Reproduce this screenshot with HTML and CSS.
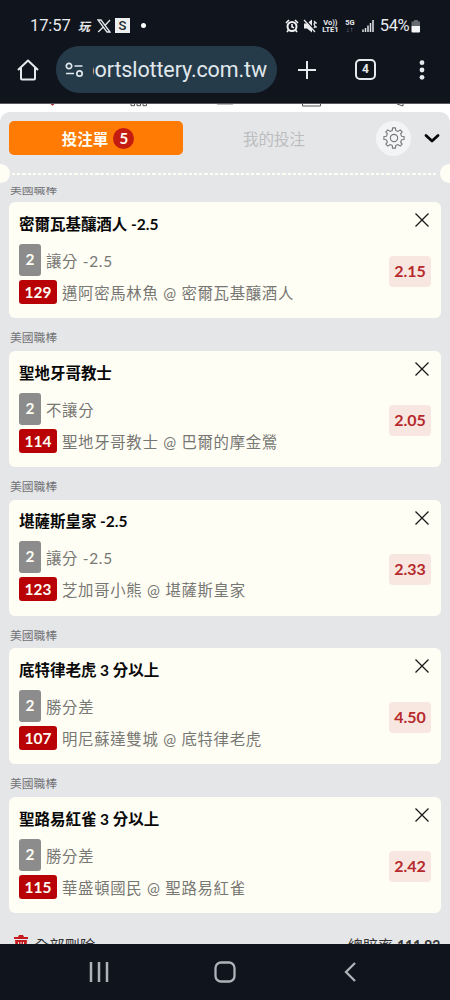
FILE: index.html
```html
<!DOCTYPE html>
<html lang="zh-Hant">
<head>
<meta charset="utf-8">
<title>投注單</title>
<link rel="stylesheet" href="styles.css">
</head>
<body>
<div class="phone">
  <header class="top">
    <div class="status">
      <span class="clock">17:57</span>
      <span class="app-glyph">玩</span>
      <svg class="x-logo" width="14" height="14" viewBox="0 0 14 14" fill="none" stroke="#e4e6e9"><path d="M1 1h3l9 12h-3zM13 1L8.2 6.2M6 8.2L1.2 13" stroke-width="1.3"/></svg>
      <span class="s-app">S</span>
      <span class="dot"></span>
      <div class="status-right">
        <svg width="14" height="14" viewBox="0 0 14 14"><circle cx="7" cy="7.5" r="4.5" fill="none" stroke="#f0f1f3" stroke-width="2"/><path d="M7 5v3l2 .8M1 4L4 1M13 4L10 1M3.5 11L2 13M10.500 11L12 13" fill="none" stroke="#f0f1f3" stroke-width="1.6"/></svg>
        <svg class="mute" width="14" height="14" viewBox="0 0 14 14"><path d="M1 4.500h3l5-4v13L4 9.500H1z" fill="#e8eaed"/><path d="M2 .5l11 12" stroke="#10141d" stroke-width="1.500"/><path d="M1 1l11 12M11 2l1 1-1 2 1 2-1 2M13 3v2M13 7v2" fill="none" stroke="#e8eaed" stroke-width="1.2"/></svg>
        <span class="lte"><b>Vo))</b><b>LTE1</b></span>
        <span class="five"><b>5G</b><i>↓↑</i></span>
        <svg class="signal" width="12" height="12" viewBox="0 0 12 12"><path d="M1 12V9.500M3.500 12V8M6 12V5.500M8.500 12V3M11 12V0" stroke="#e0e2e6" stroke-width="1.5"/></svg>
        <span class="percent">54%</span>
        <svg width="10" height="14" viewBox="0 0 10 14"><path d="M3 1h4v1.500h2V7H.5V2.500H3z" fill="#666b72"/><path d="M.5 7H9v5.500q0 1-1 1H1.500q-1 0-1-1z" fill="#f4f5f6"/></svg>
      </div>
    </div>
    <div class="browser">
      <svg class="home" width="22" height="22" viewBox="0 0 22 22" fill="none" stroke="#e6e9ed" stroke-width="2" stroke-linejoin="round"><path d="M1 11L11 1.500 21 11M4 9v10.500q0 1 1 1h12q1 0 1-1V9"/></svg>
      <div class="address">
        <svg width="19" height="16" viewBox="0 0 19 16" fill="none" stroke="#e0e8ed" stroke-width="1.700"><circle cx="4" cy="4" r="2.700"/><circle cx="14.500" cy="11.500" r="2.700"/><path d="M9.500 4H17.500M1 11.500h8"/></svg>
        <div class="url"><span>portslottery.com.tw</span></div>
      </div>
      <svg class="plus" width="18" height="18" viewBox="0 0 18 18" stroke="#e6e9ed" stroke-width="2"><path d="M9 0v18M0 9h18"/></svg>
      <span class="tabs">4</span>
      <svg class="more" width="6" height="20" viewBox="0 0 6 20" fill="#e6e9ed"><circle cx="3" cy="2.700" r="2.400"/><circle cx="3" cy="10" r="2.400"/><circle cx="3" cy="17.300" r="2.400"/></svg>
    </div>
  </header>
  <div class="site-nav">
    <svg width="450" height="9" viewBox="0 0 450 9"><path d="M50.500 0h4l-2 1.800z" fill="#a22"/><path d="M131 0v1.700h3.500V0M137 0v1.700h3.500V0M143 0v1.700h3.500V0M302.500 0v2h18V0M397 0l6 2V0" fill="none" stroke="#555" stroke-width="1"/><path d="M217 .3h16" stroke="#aaa"/></svg>
  </div>
  <main class="slip">
    <div class="slip-tabs">
      <div class="tab-active">投注單<span class="count">5</span></div>
      <div class="tab">我的投注</div>
      <div class="gear"><svg width="22" height="22" viewBox="-12 -12 24 24" fill="none" stroke="#777" stroke-width="1.200" stroke-linejoin="round"><circle r="4"/><path d="M-1.900-8.300L-1.600-11h3.200l.3 2.700 2.600 1.100 2.200-1.700 2.200 2.200-1.700 2.200 1.100 2.600 2.700.3v3.200l-2.700.3-1.100 2.600 1.700 2.200-2.200 2.200-2.200-1.700-2.600 1.100-.3 2.700h-3.200l-.3-2.700-2.600-1.100-2.200 1.700-2.200-2.200 1.700-2.200-1.100-2.600-2.700-.3v-3.200l2.700-.3 1.100-2.600-1.700-2.200 2.200-2.200 2.200 1.700z"/></svg></div>
      <svg class="chevron" width="16" height="10" viewBox="0 0 16 10" fill="none" stroke="#080808" stroke-width="2.800" stroke-linecap="round" stroke-linejoin="round"><path d="M2 2.500l6 5.500L14 2.500"/></svg>
    </div>
    <div class="perforation"><span class="notch"></span><span class="dashes"></span><span class="notch right"></span></div>
    <div class="bets">
      <div class="league first"><span>美國職棒</span></div>
      <section class="card">
        <div class="info"><h2>密爾瓦基釀酒人 -2.5</h2><div class="line"><b class="pick">2</b>讓分 -2.5</div><div class="line"><b class="code">129</b>邁阿密馬林魚 @ 密爾瓦基釀酒人</div></div>
        <div class="side"><svg class="close" viewBox="0 0 14 14"><path d="M.5.5l13 13M13.500.5l-13 13"/></svg><b class="odds">2.15</b></div>
      </section>
      <div class="league">美國職棒</div>
      <section class="card">
        <div class="info"><h2>聖地牙哥教士</h2><div class="line"><b class="pick">2</b>不讓分</div><div class="line"><b class="code">114</b>聖地牙哥教士 @ 巴爾的摩金鶯</div></div>
        <div class="side"><svg class="close" viewBox="0 0 14 14"><path d="M.5.5l13 13M13.500.5l-13 13"/></svg><b class="odds">2.05</b></div>
      </section>
      <div class="league">美國職棒</div>
      <section class="card">
        <div class="info"><h2>堪薩斯皇家 -2.5</h2><div class="line"><b class="pick">2</b>讓分 -2.5</div><div class="line"><b class="code">123</b>芝加哥小熊 @ 堪薩斯皇家</div></div>
        <div class="side"><svg class="close" viewBox="0 0 14 14"><path d="M.5.5l13 13M13.500.5l-13 13"/></svg><b class="odds">2.33</b></div>
      </section>
      <div class="league">美國職棒</div>
      <section class="card">
        <div class="info"><h2>底特律老虎 3 分以上</h2><div class="line"><b class="pick">2</b>勝分差</div><div class="line"><b class="code">107</b>明尼蘇達雙城 @ 底特律老虎</div></div>
        <div class="side"><svg class="close" viewBox="0 0 14 14"><path d="M.5.5l13 13M13.500.5l-13 13"/></svg><b class="odds">4.50</b></div>
      </section>
      <div class="league">美國職棒</div>
      <section class="card">
        <div class="info"><h2>聖路易紅雀 3 分以上</h2><div class="line"><b class="pick">2</b>勝分差</div><div class="line"><b class="code">115</b>華盛頓國民 @ 聖路易紅雀</div></div>
        <div class="side"><svg class="close" viewBox="0 0 14 14"><path d="M.5.5l13 13M13.500.5l-13 13"/></svg><b class="odds">2.42</b></div>
      </section>
    </div>
    <div class="summary">
      <svg width="14" height="16" viewBox="0 0 14 16" fill="#c41a20"><path d="M0 2h4l1-2h4l1 2h4v2H0zM1 5h12l-1 11H2z"/><path d="M4.500 7v7M7 7v7M9.500 7v7" stroke="#e5e6e8"/></svg>
      <span>全部刪除</span><span class="total">總賠率 <b>111.83</b></span>
    </div>
  </main>
  <nav class="system-nav">
    <svg width="20" height="20" viewBox="0 0 20 20" stroke="#aeb2b9" stroke-width="2.500"><path d="M2 0v20M10 0v20M18 0v20"/></svg>
    <svg class="home-key" width="22" height="22" viewBox="0 0 22 22" fill="none" stroke="#aeb2b9" stroke-width="2.300"><rect x="1.500" y="1.500" width="19" height="19" rx="5.500"/></svg>
    <svg width="12" height="20" viewBox="0 0 12 20" fill="none" stroke="#aeb2b9" stroke-width="2.300"><path d="M11 1L2 10l9 9"/></svg>
  </nav>
</div>
</body>
</html>
```
FILE: styles.css
```css
* { box-sizing: border-box; }
body { margin: 0; font-family: Lato, "Noto Sans CJK TC", sans-serif; }
svg { display: block; flex: none; }
.phone { width: 450px; height: 1000px; display: flex; flex-direction: column; overflow: hidden; background: #fff; }
.top { height: 104px; flex: none; background: #10141d; border-bottom: 1px solid #5b5960; color: #e8eaed; font-family: Roboto, sans-serif; }
.status { height: 46px; padding: 5px 29px 0 30px; display: flex; align-items: center; }
.clock { width: 48px; font-size: 16.5px; letter-spacing: -.1px; white-space: nowrap; }
.app-glyph { width: 13px; font: italic bold 12px/14px "Noto Sans CJK TC", sans-serif; }
.x-logo { margin-left: 6px; }
.s-app { width: 15px; height: 15px; margin-left: 4px; background: #edeef0; color: #20242b; font: 500 13px/15px Roboto, sans-serif; text-align: center; }
.dot { width: 5px; height: 5px; margin-left: 11px; border-radius: 50%; background: #fff; }
.status-right { margin-left: auto; display: flex; align-items: center; }
.mute { margin-left: 4px; }
.lte, .five { display: flex; flex-direction: column; font-size: 7.5px; line-height: 7px; margin-left: 5px; }
.lte { width: 17px; align-items: center; }
.five { width: 12px; align-items: center; }
.five i { font-style: normal; color: #80858c; }
.signal { margin-left: 6px; }
.percent { font-size: 16.5px; margin: 0 2px 0 6px; letter-spacing: -.5px; }
.browser { height: 47px; display: flex; align-items: center; }
.home { margin-left: 17px; }
.address { width: 221px; height: 47px; margin-left: 17px; padding: 0 9px; display: flex; align-items: center; border-radius: 24px; background: #263b49; color: #e0e8ed; }
.url { width: 174px; margin-left: 9px; display: flex; justify-content: flex-end; overflow: hidden; font-size: 21.5px; letter-spacing: -.12px; line-height: 30px; }
.plus { margin-left: 21px; }
.tabs { width: 21px; height: 21px; margin-left: 39px; border: 2px solid #e6e9ed; border-radius: 5px; font-size: 12px; font-weight: bold; line-height: 17px; text-align: center; }
.more { margin-left: 43px; }
.site-nav { height: 8px; flex: none; overflow: hidden; }
.slip { height: 832px; flex: none; background: #e5e6e8; border-radius: 10px 10px 0 0; overflow: hidden; }
.slip-tabs { height: 52px; padding: 0 10px 0 9px; display: flex; align-items: center; }
.tab-active { width: 174px; height: 34px; padding-left: 4px; display: flex; align-items: center; justify-content: center; gap: 5px; border-radius: 5px; background: #ff7b04; color: #fffef5; font-size: 15.5px; font-weight: bold; }
.count { width: 21px; height: 21px; border-radius: 50%; background: #c51c12; font-size: 15px; line-height: 21px; text-align: center; }
.tab { width: 182px; text-align: center; font-size: 15.5px; color: #bcbdbf; }
.gear { width: 35px; height: 35px; margin-left: 11px; display: flex; align-items: center; justify-content: center; border-radius: 50%; background: #f3f4f5; }
.chevron { margin-left: 13px; }
.perforation { height: 19px; display: flex; align-items: center; }
.notch { width: 10px; height: 19px; flex: none; border-radius: 0 10px 10px 0; background: #fffef5; }
.notch.right { border-radius: 10px 0 0 10px; }
.dashes { flex: 1; height: 2px; margin: 0 2px; background: repeating-linear-gradient(90deg, #fffef5 0 3.300px, transparent 3.300px 5.200px); }
.bets { padding: 4px 9px 0; }
.league { height: 32.700px; padding: 3px 0 0 1px; font-size: 11.800px; line-height: 33px; color: #717276; }
.league.first { height: 15.400px; padding-top: 0; display: flex; align-items: flex-start; overflow: hidden; line-height: 16px; }
.league.first span { margin-top: -5px; }
.card { height: 116px; padding: 0 10px; display: flex; justify-content: space-between; border-radius: 6px; background: #fffef5; }
.info { padding-top: 9.500px; }
h2 { margin: 0 0 8px; font-size: 15.500px; line-height: 24px; letter-spacing: -.03px; color: #080808; white-space: nowrap; }
.line { display: flex; align-items: center; height: 32px; font-size: 15.400px; letter-spacing: .7px; color: #777773; white-space: nowrap; }
.pick, .code { letter-spacing: 0; color: #fffef5; text-align: center; border-radius: 3px; margin-right: 5px; }
.pick { width: 22px; height: 32px; line-height: 31px; background: #8c8c8c; }
.code { width: 38px; height: 24px; line-height: 24px; background: #b90205; }
.side { display: flex; flex-direction: column; align-items: flex-end; padding-top: 11px; }
.close { width: 14px; height: 14px; margin-right: 2.500px; fill: none; stroke: #191919; stroke-width: 1.300; }
.odds { width: 42px; height: 31px; margin-top: 29px; border-radius: 4px; background: #f8e7e1; color: #b6292c; font-size: 16px; line-height: 30px; text-align: center; }
.summary { padding: 22px 10px 0 14px; display: flex; align-items: flex-start; font-size: 15.300px; line-height: 20px; color: #333; }
.summary span { margin-left: 6px; }
.summary .total { margin-left: auto; font-size: 15px; }
.total b { font-size: 14.500px; letter-spacing: -.4px; }
.system-nav { height: 56px; flex: none; padding: 0 94px 0 89px; display: flex; align-items: center; justify-content: space-between; background: #10141d; }
.home-key { margin-right: 4px; }
```
